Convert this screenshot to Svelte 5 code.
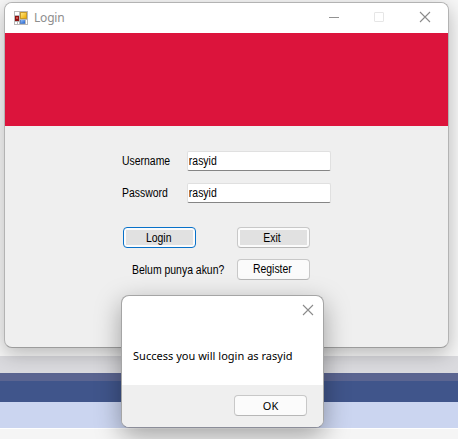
<script>
  let username = $state('rasyid');
  let password = $state('rasyid');
</script>

<main class="desktop">
  <div class="backdrop">
    <div class="page"></div>
    <div class="band grey"></div>
    <div class="band slate"></div>
    <div class="band navy"></div>
    <div class="band pale"></div>
    <div class="band foot"></div>
  </div>

  <section class="window">
    <header class="titlebar">
      <svg class="appicon" width="14" height="14" viewBox="0 0 14 14" shape-rendering="crispEdges">
        <defs>
          <linearGradient id="gold" x1="0" y1="0" x2="1" y2="1"><stop stop-color="#ffe680" /><stop offset="1" stop-color="#efad00" /></linearGradient>
          <linearGradient id="blue" x1="0" y1="0" x2="1" y2="1"><stop stop-color="#91bdf8" /><stop offset="1" stop-color="#2768d2" /></linearGradient>
        </defs>
        <path fill="#b9b9b9" d="M0 0h14v14H0z" />
        <path fill="#fff" d="M1 1h4v3H1zM1 11h2v2H1zM4 11h1v2H4zM12 9h1v4h-1z" />
        <path fill="#c79a2a" d="M6 1h7v7H6z" />
        <path fill="url(#gold)" d="M7 2h5v5H7z" />
        <path fill="#8d1111" d="M1 5h4v5H1z" />
        <path fill="#cf4b43" d="M2 6h2v2H2z" />
        <path fill="#5d86c8" d="M6 9h5v4H6z" />
        <path fill="url(#blue)" d="M7 9h4v3H7z" />
      </svg>
      <span class="title">Login</span>
      <svg class="controls" width="103" height="13" viewBox="0 0 103 13" fill="none">
        <path stroke="#929292" d="M0 6.5h10" />
        <rect x="45.5" y="1.5" width="9" height="9" rx=".5" stroke="#e6e6e6" />
        <path stroke="#8b8b8b" stroke-width="1.1" d="M91 1l10 10M101 1L91 11" />
      </svg>
    </header>
    <div class="banner"></div>
    <div class="form">
      <label class="field"><span class="name"><span class="narrow left">Username</span></span><span class="box"><input class="narrow left" bind:value={username} /></span></label>
      <label class="field"><span class="name"><span class="narrow left">Password</span></span><span class="box"><input class="narrow left" bind:value={password} /></span></label>
      <div class="actions">
        <button class="framed focused"><span class="fill"><span class="narrow">Login</span></span></button>
        <button class="framed"><span class="fill"><span class="narrow">Exit</span></span></button>
      </div>
      <div class="signup">
        <span class="question"><span class="narrow left">Belum punya akun?</span></span>
        <button class="register"><span class="narrow">Register</span></button>
      </div>
    </div>
  </section>

  <section class="dialog">
    <div class="message">
      <svg class="close" width="12" height="12" viewBox="0 0 12 12" fill="none">
        <path stroke="#8b8b8b" stroke-width="1.1" d="M1 1l10 10M11 1L1 11" />
      </svg>
      <p>Success you will login as rasyid</p>
    </div>
    <footer><button class="ok">OK</button></footer>
  </section>
</main>

<style>
  :global(body) { margin: 0; overflow: hidden; }
  .desktop { position: relative; width: 458px; height: 439px; overflow: hidden; font-family: "Liberation Sans", sans-serif; color: #000; }
  .backdrop { display: flex; flex-direction: column; height: 100%; }
  .page { height: 356px; background: #f7f7f7; }
  .grey { height: 17px; background: #dbdbdf; }
  .slate { height: 8px; background: #5b6591; }
  .navy { height: 21px; background: #40558b; }
  .pale { height: 26px; background: #cbd5f0; }
  .foot { flex: 1; box-sizing: border-box; border-top: 1px solid #fff; background: #f5f5f5; }

  .window { position: absolute; left: 4px; top: 2px; width: 445px; height: 346px; box-sizing: border-box; border: 1px solid #b3b3b3; border-bottom-color: #9c9c9c; border-radius: 8px; background: #efefef; overflow: hidden; box-shadow: 0 6px 20px rgba(0, 0, 0, .26); }
  .titlebar { height: 30px; display: flex; align-items: center; background: #fff; }
  .appicon { margin-left: 9px; margin-top: -1px; }
  .title { margin-left: 6px; font: 12px/16px "Noto Sans", sans-serif; letter-spacing: -.2px; color: #8e8e8e; }
  .controls { margin-left: auto; margin-right: 16px; margin-top: -1px; }
  .banner { height: 93px; background: #dc143c; }
  .form { padding: 25px 0 0 117px; }
  .narrow { display: inline-block; transform: scaleX(.87); white-space: nowrap; }
  .left { transform-origin: 0 50%; }
  .field { display: flex; align-items: center; height: 20px; margin-bottom: 12px; font-size: 12px; }
  .name { width: 65px; }
  .box { width: 144px; height: 20px; box-sizing: border-box; border: 1px solid #e0e0e0; border-bottom-color: #858585; border-radius: 2px; background: #fff; }
  input { width: 160px; height: 18px; box-sizing: border-box; border: 0; padding: 0 0 0 1px; background: none; font: 12px "Liberation Sans", sans-serif; color: #000; outline: none; }
  button { width: 73px; height: 21px; box-sizing: border-box; border: 1px solid #c8c8c8; border-bottom-color: #b7b7b7; border-radius: 4px; padding: 0; background: #fbfbfb; font: 12px/19px "Liberation Sans", sans-serif; color: #000; }
  .register .narrow { position: relative; left: -1px; }
  .framed { padding: 2px; }
  .fill { display: block; height: 15px; line-height: 16px; background: #e1e1e1; }
  .fill .narrow { position: relative; left: -1px; }
  .focused { border-color: #0871c9; }
  .actions { display: flex; gap: 41px; margin: 24px 0 0 1px; }
  .signup { display: flex; align-items: center; margin: 11px 0 0 10px; }
  .question { width: 105px; font-size: 12px; white-space: nowrap; }

  .dialog { position: absolute; left: 121px; top: 295px; width: 203px; height: 133px; box-sizing: border-box; display: flex; flex-direction: column; border: 1px solid #a5a5a5; border-bottom-color: #8b8d99; border-radius: 8px; overflow: hidden; background: #fff; box-shadow: 0 8px 26px rgba(0, 0, 0, .34); }
  .message { height: 89px; display: flex; flex-direction: column; }
  .close { align-self: flex-end; margin: 8px 9px 0 0; }
  p { margin: 32px 0 0 11px; font: 11px/16px "Noto Sans", sans-serif; letter-spacing: .02px; white-space: nowrap; }
  footer { flex: 1; display: flex; justify-content: flex-end; padding: 10px 16px 0 0; background: #efefef; }
  .ok { font: 11px/19px "Noto Sans", sans-serif; }
</style>
